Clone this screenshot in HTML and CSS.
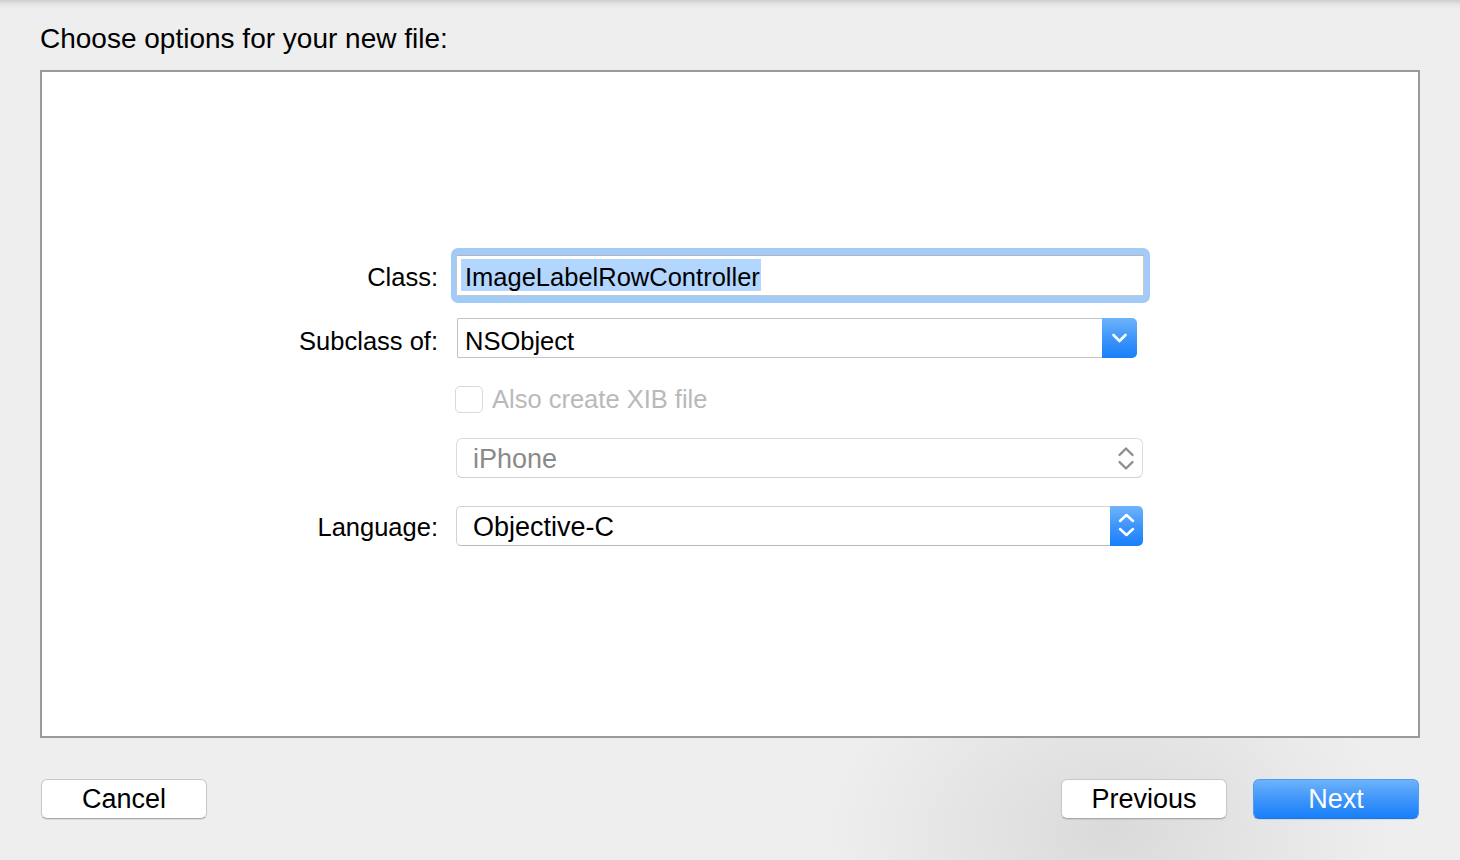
FILE: index.html
```html
<!DOCTYPE html>
<html>
<head>
<meta charset="utf-8">
<link rel="stylesheet" href="styles.css">
</head>
<body>
<div class="window">
  <h1 class="title">Choose options for your new file:</h1>
  <div class="panel">
    <div class="form">
      <div class="row row-class">
        <div class="label lbl-class">Class:</div>
        <div class="ring">
          <div class="field"><span class="sel">ImageLabelRowController</span></div>
        </div>
      </div>
      <div class="row row-sub">
        <div class="label lbl-sub">Subclass of:</div>
        <div class="popup popup-sub">
          <div class="popup-text">NSObject</div>
          <div class="popup-btn btn-sub">
            <svg width="35" height="40" viewBox="0 0 35 40"><path d="M11.5 17 L17.5 23 L23.5 17" fill="none" stroke="#fff" stroke-width="2.6" stroke-linecap="round" stroke-linejoin="round"/></svg>
          </div>
        </div>
      </div>
      <div class="row row-check">
        <div class="label"></div>
        <div class="check-wrap">
          <span class="checkbox"></span>
          <span class="check-label">Also create XIB file</span>
        </div>
      </div>
      <div class="row row-dev">
        <div class="label"></div>
        <div class="popup2 disabled">
          <span class="popup2-text">iPhone</span>
          <svg class="stepper" width="22" height="40" viewBox="0 0 22 40"><path d="M4.5 17 L11 10.5 L17.5 17 M4.5 24 L11 30.5 L17.5 24" fill="none" stroke="#8e8e8e" stroke-width="2.4" stroke-linecap="round" stroke-linejoin="round"/></svg>
        </div>
      </div>
      <div class="row row-lang">
        <div class="label lbl-lang">Language:</div>
        <div class="popup popup-lang">
          <div class="popup-text big">Objective-C</div>
          <div class="popup-btn btn-lang">
            <svg width="33" height="40" viewBox="0 0 33 40"><path d="M10 15 L16.5 9 L23 15 M10 23 L16.5 29 L23 23" fill="none" stroke="#fff" stroke-width="2.5" stroke-linecap="round" stroke-linejoin="round"/></svg>
          </div>
        </div>
      </div>
    </div>
  </div>
  <div class="footer">
    <button class="btn btn-cancel">Cancel</button>
    <div class="spacer"></div>
    <button class="btn">Previous</button>
    <button class="btn btn-primary">Next</button>
  </div>
</div>
</body>
</html>
```

FILE: styles.css
```css
html, body {
  margin: 0;
  padding: 0;
}
body {
  width: 1460px;
  height: 860px;
  overflow: hidden;
  font-family: "Liberation Sans", Arial, Helvetica, sans-serif;
  color: #000;
  background:
    linear-gradient(to bottom, #cdcdcd 0px, #e4e4e4 4px, rgba(238,238,238,0) 9px),
    radial-gradient(ellipse 280px 190px at 1110px 830px, #dadada, rgba(238,238,238,0)),
    #eeeeee;
}
.window {
  display: flex;
  flex-direction: column;
  padding: 22px 40px 0 40px;
  height: 860px;
  box-sizing: border-box;
}
.title {
  margin: 0;
  font-size: 28px;
  font-weight: normal;
  line-height: 34px;
  height: 34px;
  color: #000;
}
.panel {
  margin-top: 14px;
  height: 668px;
  box-sizing: border-box;
  border: 2px solid #9a9a9a;
  background: #fff;
}
.form {
  display: flex;
  flex-direction: column;
  padding-top: 176px;
}
.row {
  display: grid;
  grid-template-columns: 396px 699px;
  column-gap: 13px;
  align-items: start;
}
.label {
  text-align: right;
  font-size: 25.5px;
  line-height: 30px;
  color: #000;
}
.lbl-class { margin-top: 14px; }
.lbl-sub { margin-top: 8px; }
.lbl-lang { margin-top: 6px; }

.row-sub { margin-top: 15px; }
.row-check { margin-top: 28px; }
.row-dev { margin-top: 25px; }
.row-lang { margin-top: 28px; }

/* focused text field */
.ring {
  height: 55px;
  box-sizing: border-box;
  padding: 7px 6px 7px 5px;
  background: #a3cbf8;
  border-radius: 7px;
}
.field {
  height: 41px;
  box-sizing: border-box;
  background: #fff;
  border: 1px solid #c6c6c6;
  border-top-color: #b4b4b4;
  padding-left: 4px;
}
.sel {
  display: inline-block;
  margin-top: 3px;
  padding: 2px 1px 0 4px;
  height: 32px;
  box-sizing: border-box;
  line-height: 32px;
  font-size: 25.5px;
  background: #b3d6fe;
  color: #000;
}

/* popup with blue button */
.popup {
  display: flex;
  height: 40px;
}
.popup-sub {
  margin-left: 6px;
  width: 680px;
}
.popup-lang {
  margin-left: 5px;
  width: 687px;
}
.popup-text {
  flex: 1;
  box-sizing: border-box;
  border: 1px solid #c4c4c4;
  border-right: none;
  border-radius: 2px 0 0 2px;
  font-size: 25.5px;
  line-height: 38px;
  padding: 3px 0 0 7px;
  background: #fff;
  color: #000;
}
.popup-lang .popup-text {
  border-radius: 5px 0 0 5px;
  border-color: #d2d2d2;
  border-bottom-color: #b8b8b8;
}
.popup-text.big {
  font-size: 27px;
  padding: 1px 0 0 16px;
}
.popup-btn {
  display: flex;
  background: linear-gradient(to bottom, #70b4fb 0%, #3e95fa 50%, #197ffb 100%);
  border-radius: 0 5px 5px 0;
}
.btn-sub { width: 35px; }
.btn-lang { width: 33px; }

/* checkbox */
.check-wrap {
  display: flex;
  align-items: center;
  margin-left: 4px;
  height: 27px;
}
.checkbox {
  width: 28px;
  height: 27px;
  box-sizing: border-box;
  border: 1px solid #d9d9d9;
  border-radius: 5px;
  background: #fff;
}
.check-label {
  margin-left: 9px;
  font-size: 25.5px;
  line-height: 27px;
  margin-top: 0;
  color: #b9b9b9;
}

/* disabled popup */
.popup2 {
  margin-left: 5px;
  width: 687px;
  height: 40px;
  box-sizing: border-box;
  display: flex;
  align-items: center;
  border: 1px solid #dcdcdc;
  border-bottom-color: #cfcfcf;
  border-radius: 6px;
  background: #fff;
}
.popup2-text {
  flex: 1;
  font-size: 27px;
  line-height: 38px;
  padding-left: 16px;
  padding-top: 2px;
  color: #8a8a8a;
}
.stepper {
  margin-right: 5px;
}

/* footer buttons */
.footer {
  display: flex;
  margin-top: 41px;
  padding-right: 1px;
  gap: 26px;
}
.spacer { flex: 1; }
.btn {
  width: 166px;
  height: 40px;
  box-sizing: border-box;
  border: 1px solid #c8c8c8;
  border-bottom-color: #a8a8a8;
  border-radius: 6px;
  background: #fff;
  font-family: "Liberation Sans", Arial, Helvetica, sans-serif;
  font-size: 27px;
  line-height: 38px;
  padding: 0;
  color: #000;
  box-shadow: 0 1px 1px rgba(0,0,0,0.08);
}
.btn-cancel {
  margin-left: 1px;
}
.btn-primary {
  border: 1px solid #4d9cf8;
  border-bottom-color: #1a75f0;
  background: linear-gradient(to bottom, #6db3fb 0%, #3f96fa 50%, #197ffb 100%);
  color: #fff;
}
```
